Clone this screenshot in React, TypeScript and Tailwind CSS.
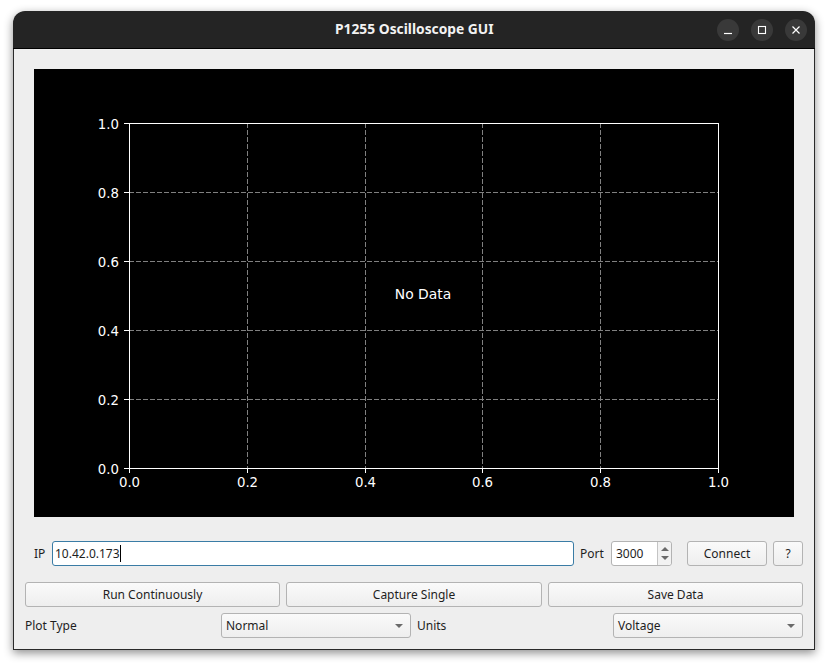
import React from "react";

const ui = "font-['Noto_Sans','Open_Sans',sans-serif] text-[12px] text-[#1e1e1e]";
const btn =
  "h-[25px] flex items-center justify-center rounded-[3px] border border-[#b3b3b3] bg-gradient-to-b from-[#fafafa] to-[#eeeeee] " + ui;

function Combo({ label, className }: { label: string; className: string }) {
  return (
    <div className={"h-[25px] flex items-center justify-between pl-[4px] pr-[7px] rounded-[3px] border border-[#b3b3b3] bg-gradient-to-b from-[#fafafa] to-[#eeeeee] " + ui + " " + className}>
      <span>{label}</span>
      <svg width="8" height="4" viewBox="0 0 8 4"><path d="M0 0H8L4 4Z" fill="#6a6a6a" /></svg>
    </div>
  );
}

function Plot() {
  const xs = [129, 247, 365, 482, 600, 718];
  const ys = [468, 399, 330, 261, 192, 123];
  const labels = ["0.0", "0.2", "0.4", "0.6", "0.8", "1.0"];
  const font = "'DejaVu Sans', sans-serif";
  return (
    <svg width="760" height="448" viewBox="34 69 760 448" className="block bg-black">
      <g stroke="#808080" strokeWidth="1" strokeDasharray="5 2" shapeRendering="crispEdges">
        {xs.slice(1, 5).map((x) => <line key={x} x1={x + 0.5} x2={x + 0.5} y1={123} y2={468} />)}
        {ys.slice(1, 5).map((y) => <line key={y} y1={y + 0.5} y2={y + 0.5} x1={129} x2={718} />)}
      </g>
      <g stroke="#fff" strokeWidth="1" shapeRendering="crispEdges">
        <rect x="129.5" y="123.5" width="589" height="345" fill="none" />
        {xs.map((x) => <line key={x} x1={x + 0.5} x2={x + 0.5} y1={468} y2={473} />)}
        {ys.map((y) => <line key={y} y1={y + 0.5} y2={y + 0.5} x1={124} x2={129} />)}
      </g>
      <g fill="#fff" fontFamily={font} fontSize="13.3">
        {xs.map((x, i) => <text key={x} x={x + 0.5} y={487} textAnchor="middle">{labels[i]}</text>)}
        {ys.map((y, i) => <text key={y} x={119} y={y + 5.5} textAnchor="end">{labels[i]}</text>)}
        <text x={423} y={299} textAnchor="middle" fontSize="13.9">No Data</text>
      </g>
    </svg>
  );
}

function WinBtn({ children }: { children: React.ReactNode }) {
  return <div className="w-[22px] h-[22px] rounded-full bg-[#393939] flex items-center justify-center">{children}</div>;
}

export default function App() {
  return (
    <div className="w-[828px] h-[666px] bg-white pt-[11px] pl-[13px] overflow-hidden">
      <div className="w-[802px] h-[639px] rounded-t-[12px] shadow-[0_3px_10px_rgba(0,0,0,0.45)] flex flex-col">
        <div className="h-[38px] shrink-0 rounded-t-[12px] bg-[#242424] border-b border-black flex items-center justify-between pl-[322px] pr-[8px]">
          <span className="font-['Noto_Sans',sans-serif] font-bold text-[13.8px] text-[#f2f2f2]">P1255 Oscilloscope GUI</span>
          <div className="flex gap-[12px]">
            <WinBtn>
              <svg width="10" height="10" viewBox="0 0 10 10"><path d="M1 8.5H9" stroke="#fff" strokeWidth="1.2" /></svg>
            </WinBtn>
            <WinBtn>
              <svg width="10" height="10" viewBox="0 0 10 10"><rect x="1.5" y="1.5" width="7" height="7" fill="none" stroke="#fff" strokeWidth="1.1" /></svg>
            </WinBtn>
            <WinBtn>
              <svg width="10" height="10" viewBox="0 0 10 10"><path d="M1.5 1.5L8.5 8.5M8.5 1.5L1.5 8.5" stroke="#fff" strokeWidth="1.2" /></svg>
            </WinBtn>
          </div>
        </div>
        <div className="flex-1 bg-[#eeeeee] border-x border-b border-[#2a2a2a] pl-[11px] pr-[10px]">
          <div className="mt-[20px] ml-[9px] w-[760px]">
            <Plot />
          </div>
          <div className="mt-[24px] flex items-center h-[25px] ml-[9px]">
            <span className={ui + " w-[18px]"}>IP</span>
            <div className="w-[522px] h-[25px] rounded-[3px] border border-[#3a7ca5] bg-white flex items-center pl-[2px]">
              <span className={ui}>10.42.0.173</span>
              <span className="w-px h-[17px] bg-black" />
            </div>
            <span className={ui + " ml-[6px] w-[31px]"}>Port</span>
            <div className="w-[61px] h-[25px] rounded-[3px] border border-[#b3b3b3] bg-white flex items-center justify-between pl-[4px]">
              <span className={ui}>3000</span>
              <div className="w-[14px] h-full border-l border-[#c4c4c4] bg-[#f2f2f2] rounded-r-[3px] flex flex-col items-center justify-center gap-[5px]">
                <svg width="8" height="4" viewBox="0 0 8 4"><path d="M0 4H8L4 0Z" fill="#6a6a6a" /></svg>
                <svg width="8" height="4" viewBox="0 0 8 4"><path d="M0 0H8L4 4Z" fill="#6a6a6a" /></svg>
              </div>
            </div>
            <div className={btn + " ml-[15px] w-[80px]"}>Connect</div>
            <div className={btn + " ml-[6px] w-[30px]"}>?</div>
          </div>
          <div className="mt-[16px] flex gap-[6px]">
            <div className={btn + " w-[255px]"}>Run Continuously</div>
            <div className={btn + " w-[256px]"}>Capture Single</div>
            <div className={btn + " w-[255px]"}>Save Data</div>
          </div>
          <div className="mt-[6px] flex items-center">
            <span className={ui + " w-[196px]"}>Plot Type</span>
            <Combo label="Normal" className="w-[190px]" />
            <span className={ui + " ml-[6px] w-[196px]"}>Units</span>
            <Combo label="Voltage" className="w-[190px]" />
          </div>
        </div>
      </div>
    </div>
  );
}
